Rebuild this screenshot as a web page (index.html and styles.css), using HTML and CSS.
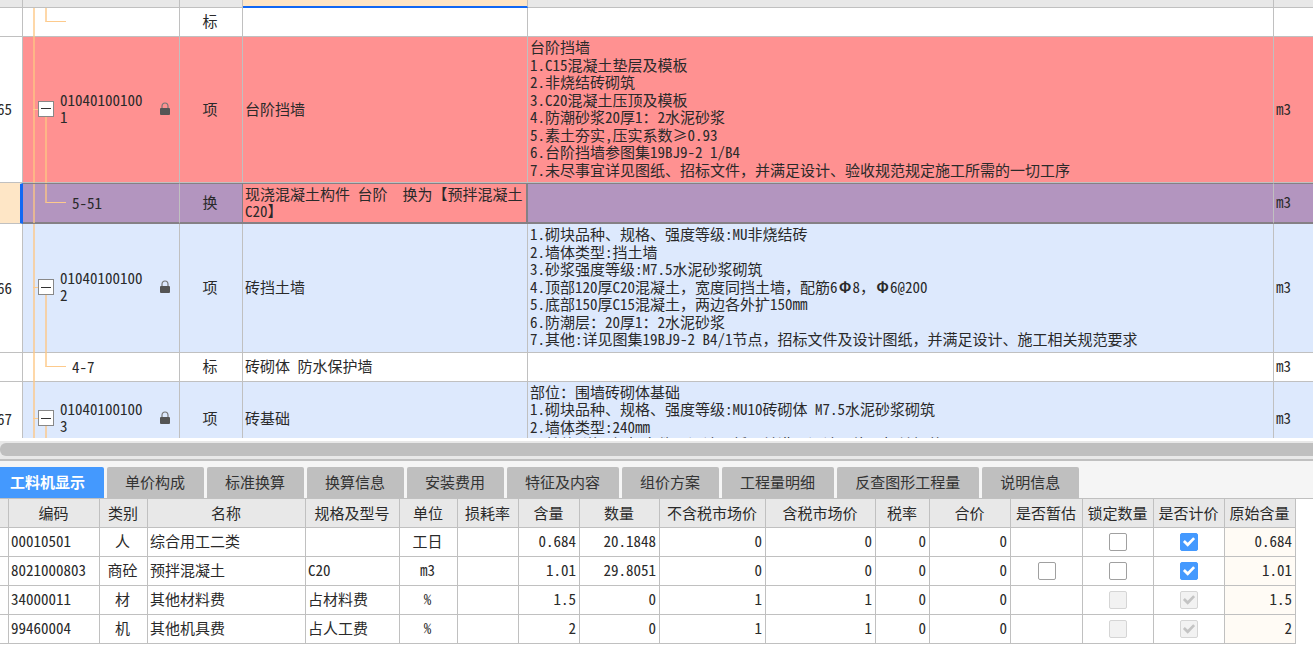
FILE: index.html
```html
<!DOCTYPE html>
<html lang="zh-CN">
<head>
<meta charset="utf-8">
<title>工程量清单</title>
<link rel="stylesheet" href="styles.css">
</head>
<body>
<svg class="defs" aria-hidden="true">
  <symbol id="lock" viewBox="0 0 12 14"><path d="M3 6V4.2C3 2.2 4.2 1 6 1s3 1.200 3 3.200V6" fill="none" stroke="#777" stroke-width="1.200"/><rect x="1" y="6" width="10" height="7" rx="1" fill="#555"/></symbol>
</svg>
<main class="bill">
  <table class="bill-table">
    <colgroup><col class="b-no"><col class="b-code"><col class="b-kind"><col class="b-name"><col><col class="b-unit"></colgroup>
    <thead>
      <tr><th></th><th></th><th></th><th class="current"></th><th></th><th></th></tr>
    </thead>
    <tbody>
      <tr class="short">
        <td></td><td class="code"><i class="elbow"></i></td><td class="kind">标</td><td></td><td></td><td></td>
      </tr>
      <tr class="item eight alert">
        <td class="no"><span>65</span></td>
        <td class="code"><i class="stem"></i><div class="entry"><button class="toggle" type="button" aria-label="折叠"></button><span class="number">010401001001</span><svg class="lock"><use href="#lock"/></svg></div></td>
        <td class="kind">项</td><td>台阶挡墙</td>
        <td><ul class="spec spec-8"><li>台阶挡墙</li><li>1.C15混凝土垫层及模板</li><li>2.非烧结砖砌筑</li><li>3.C20混凝土压顶及模板</li><li>4.防潮砂浆20厚1：2水泥砂浆</li><li>5.素土夯实,压实系数≥0.93</li><li>6.台阶挡墙参图集19BJ9-2 1/B4</li><li>7.未尽事宜详见图纸、招标文件，并满足设计、验收规范规定施工所需的一切工序</li></ul></td>
        <td>m3</td>
      </tr>
      <tr class="selected">
        <td class="no"></td>
        <td class="code"><i class="elbow"></i><span class="sub">5-51</span></td>
        <td class="kind">换</td><td class="active">现浇混凝土构件 台阶　换为【预拌混凝土 C20】</td><td></td><td>m3</td>
      </tr>
      <tr class="item seven">
        <td class="no"><span>66</span></td>
        <td class="code"><i class="stem"></i><div class="entry"><button class="toggle" type="button" aria-label="折叠"></button><span class="number">010401001002</span><svg class="lock"><use href="#lock"/></svg></div></td>
        <td class="kind">项</td><td>砖挡土墙</td>
        <td><ul class="spec spec-7"><li>1.砌块品种、规格、强度等级:MU非烧结砖</li><li>2.墙体类型:挡土墙</li><li>3.砂浆强度等级:M7.5水泥砂浆砌筑</li><li>4.顶部120厚C20混凝土，宽度同挡土墙，配筋6<span class="wide">Φ</span>8，<span class="wide">Φ</span>6@200</li><li>5.底部150厚C15混凝土，两边各外扩150mm</li><li>6.防潮层：20厚1：2水泥砂浆</li><li>7.其他:详见图集19BJ9-2 B4/1节点，招标文件及设计图纸，并满足设计、施工相关规范要求</li></ul></td>
        <td>m3</td>
      </tr>
      <tr class="short">
        <td></td><td class="code"><i class="elbow"></i><span class="sub">4-7</span></td><td class="kind">标</td><td>砖砌体 防水保护墙</td><td></td><td>m3</td>
      </tr>
      <tr class="item four">
        <td class="no"><span>67</span></td>
        <td class="code"><i class="stem"></i><div class="entry"><button class="toggle" type="button" aria-label="折叠"></button><span class="number">010401001003</span><svg class="lock"><use href="#lock"/></svg></div></td>
        <td class="kind">项</td><td>砖基础</td>
        <td><ul class="spec spec-4"><li>部位：围墙砖砌体基础</li><li>1.砌块品种、规格、强度等级:MU10砖砌体 M7.5水泥砂浆砌筑</li><li>2.墙体类型:240mm</li><li>3.其他:详见招标文件、设计图纸，并满足设计、施工相关规范</li></ul></td>
        <td>m3</td>
      </tr>
    </tbody>
  </table>
</main>
<div class="scroll"><div class="thumb"></div></div>
<section class="detail">
  <nav class="tabs" role="tablist">
    <button class="tab on" type="button" role="tab" aria-selected="true">工料机显示</button>
    <button class="tab" type="button" role="tab">单价构成</button>
    <button class="tab" type="button" role="tab">标准换算</button>
    <button class="tab" type="button" role="tab">换算信息</button>
    <button class="tab" type="button" role="tab">安装费用</button>
    <button class="tab" type="button" role="tab">特征及内容</button>
    <button class="tab" type="button" role="tab">组价方案</button>
    <button class="tab" type="button" role="tab">工程量明细</button>
    <button class="tab" type="button" role="tab">反查图形工程量</button>
    <button class="tab" type="button" role="tab">说明信息</button>
  </nav>
  <table class="res">
    <colgroup><col class="r0"><col class="r1"><col class="r2"><col class="r3"><col class="r4"><col class="r5"><col class="r6"><col class="r6"><col class="r7"><col class="r8"><col class="r9"><col class="r10"><col class="r11"><col class="r12"><col class="r13"><col class="r13"><col class="r13"></colgroup>
    <thead>
      <tr><th></th><th>编码</th><th>类别</th><th>名称</th><th>规格及型号</th><th>单位</th><th>损耗率</th><th>含量</th><th>数量</th><th>不含税市场价</th><th>含税市场价</th><th>税率</th><th>合价</th><th>是否暂估</th><th>锁定数量</th><th>是否计价</th><th>原始含量</th></tr>
    </thead>
    <tbody>
      <tr><td></td><td>00010501</td><td class="mid">人</td><td>综合用工二类</td><td></td><td class="mid">工日</td><td></td><td class="num">0.684</td><td class="num">20.1848</td><td class="num">0</td><td class="num">0</td><td class="num">0</td><td class="num">0</td><td></td><td class="tick"><input type="checkbox" aria-label="锁定数量"></td><td class="tick"><input type="checkbox" checked aria-label="是否计价"></td><td class="num origin">0.684</td></tr>
      <tr><td></td><td>8021000803</td><td class="mid">商砼</td><td>预拌混凝土</td><td>C20</td><td class="mid">m3</td><td></td><td class="num">1.01</td><td class="num">29.8051</td><td class="num">0</td><td class="num">0</td><td class="num">0</td><td class="num">0</td><td class="tick"><input type="checkbox" aria-label="是否暂估"></td><td class="tick"><input type="checkbox" aria-label="锁定数量"></td><td class="tick"><input type="checkbox" checked aria-label="是否计价"></td><td class="num origin">1.01</td></tr>
      <tr><td></td><td>34000011</td><td class="mid">材</td><td>其他材料费</td><td>占材料费</td><td class="mid">%</td><td></td><td class="num">1.5</td><td class="num">0</td><td class="num">1</td><td class="num">1</td><td class="num">0</td><td class="num">0</td><td></td><td class="tick"><input type="checkbox" disabled aria-label="锁定数量"></td><td class="tick"><input type="checkbox" checked disabled aria-label="是否计价"></td><td class="num origin">1.5</td></tr>
      <tr><td></td><td>99460004</td><td class="mid">机</td><td>其他机具费</td><td>占人工费</td><td class="mid">%</td><td></td><td class="num">2</td><td class="num">0</td><td class="num">1</td><td class="num">1</td><td class="num">0</td><td class="num">0</td><td></td><td class="tick"><input type="checkbox" disabled aria-label="锁定数量"></td><td class="tick"><input type="checkbox" checked disabled aria-label="是否计价"></td><td class="num origin">2</td></tr>
    </tbody>
  </table>
</section>
</body>
</html>
```
FILE: styles.css
```css
* { box-sizing: border-box; }

body {
  margin: 0;
  height: 100vh;
  display: flex;
  flex-direction: column;
  overflow: hidden;
  background: #fff;
  color: #2a2a2a;
  font: 15px/17px "Noto Sans Mono CJK SC", "Noto Sans CJK SC", sans-serif;
}

.defs { position: absolute; width: 0; height: 0; }

table { table-layout: fixed; border-collapse: separate; border-spacing: 0; }
th, td { padding: 0 2px 3px; border-right: 1px solid #c0c0c0; border-bottom: 1px solid #c0c0c0; }

/* Bill of quantities */
.bill { flex: 1; min-height: 0; overflow: hidden; border-bottom: 3px solid #fff; }
.bill-table { width: 100%; }
.bill-table th { height: 8px; padding: 0; background: #e8e8e8; }
.bill-table th.current { background: #fee6c6; border-bottom: 2px solid #1268f3; }
.bill-table td:last-child, .bill-table th:last-child { border-right: 0; }
.b-no { width: 23px; }
.b-code { width: 157px; }
.b-kind { width: 63px; }
.b-name { width: 285px; }
.b-unit { width: 39px; }

.short td { height: 29px; }
.eight td { height: 146px; }
.seven td { height: 129px; }
.four td { height: 75px; }
.item td { background: #dde9fd; }
.alert td { background: #ff9191; }
.item td.no { background: #fff; }
.kind { text-align: center; padding-right: 4px; }
.no { padding: 0 10px 2px 0; overflow: hidden; }
.no span { display: flex; justify-content: flex-end; }

.selected td { height: 41px; background: #b395bf; border-top: 1px solid #858085; border-bottom: 2px solid #858085; }
.selected td.no { background: #fee6c6; border-right: 3px solid #1268f3; border-top-color: #fee6c6; border-bottom: 1px solid #c0c0c0; }
.selected td.kind { border-right-color: #858085; }
.selected td.active { background: #ff9191; border-right: 2px solid #858085; padding: 0 0 3px 2px; }

/* Tree guides */
.code { position: relative; padding: 0 0 2px; }
.code::before { content: ""; position: absolute; left: 10px; top: 0; bottom: -1px; width: 2px; background: #fdc682b0; }
.elbow { position: absolute; left: 22px; top: 0; height: 50%; width: 21px; border-left: 2px solid #fdc682b0; border-bottom: 1px solid #fdca8c; }
.stem { position: absolute; left: 22px; top: 50%; bottom: -1px; width: 2px; background: #fdc682b0; }
.sub { padding-left: 49px; }
.entry { position: relative; display: flex; align-items: center; padding: 0 8px 0 15px; }
.entry::before { content: ""; position: absolute; left: 10px; top: 50%; width: 5px; height: 1px; background: #fdca8c; }
.toggle { flex: none; display: flex; align-items: center; justify-content: center; width: 16px; height: 16px; padding: 0; border: 1px solid #888; background: #fff; }
.toggle::before { content: ""; width: 10px; height: 1px; background: #333; }
.number { width: 86px; margin-left: 6px; padding-bottom: 2px; word-break: break-all; }
.lock { width: 12px; height: 14px; margin-left: auto; }

.spec { display: grid; grid-auto-rows: 1fr; margin: 0; padding: 0; list-style: none; white-space: nowrap; }
.spec-8 { height: 140px; }
.spec-7 { height: 123px; }
.spec-4 { height: 70px; }
.wide { display: inline-block; width: 15px; text-align: center; font-weight: 700; }

/* Horizontal scroll track */
.scroll { flex: none; height: 18px; padding: 2px 0 3px; background: #e8e8e8; }
.thumb { height: 13px; border-radius: 6px 0 0 6px; background: #bfbfbf; }

/* Resource detail */
.detail { flex: none; border-top: 2px solid #c0c0c0; padding-bottom: 24px; }
.tabs { display: flex; gap: 3px; padding-top: 6px; background: #f5f5f5; border-bottom: 1px solid #c0c0c0; }
.tab { height: 31px; padding: 0 19px 2px 18px; border: 0; border-radius: 2px 2px 0 0; background: #bfbfbf; color: #333; font: inherit; }
.tab.on { padding: 0 19px 2px 10px; background: #4499fe; color: #fff; font-weight: 700; border-radius: 0 2px 0 0; }

.res { width: 1296px; }
.res th { height: 29px; padding: 0 1px 2px 0; background: #e8e8e8; font-weight: 400; white-space: nowrap; }
.res td { height: 29px; white-space: nowrap; }
.res .mid { text-align: center; padding-right: 4px; }
.res .tick { padding: 0; }
.res .num { text-align: right; padding-right: 3px; }
.origin { background: #fffbf5; }
.r0 { width: 9px; }
.r1 { width: 91px; }
.r2 { width: 48px; }
.r3 { width: 158px; }
.r4 { width: 94px; }
.r5 { width: 58px; }
.r6 { width: 61px; }
.r7 { width: 80px; }
.r8 { width: 106px; }
.r9 { width: 110px; }
.r10 { width: 54px; }
.r11 { width: 81px; }
.r12 { width: 72px; }
.r13 { width: 71px; }

input[type="checkbox"] {
  appearance: none;
  display: block;
  width: 18px;
  height: 18px;
  margin: 0 auto;
  border: 1px solid #a0a0a0;
  border-radius: 2px;
  background: #fff;
}
input[type="checkbox"]:checked { border-color: #4499fe; background: #4499fe; }
input[type="checkbox"]:checked::after {
  content: "";
  display: block;
  height: 100%;
  background: #fff;
  clip-path: polygon(12% 50%, 24% 38%, 42% 55%, 76% 20%, 88% 32%, 42% 79%);
}
input[type="checkbox"]:disabled { border-color: #d5d5d5; background: #f2f2f2; }
input[type="checkbox"]:disabled::after { background: #c4c4c4; }
```
